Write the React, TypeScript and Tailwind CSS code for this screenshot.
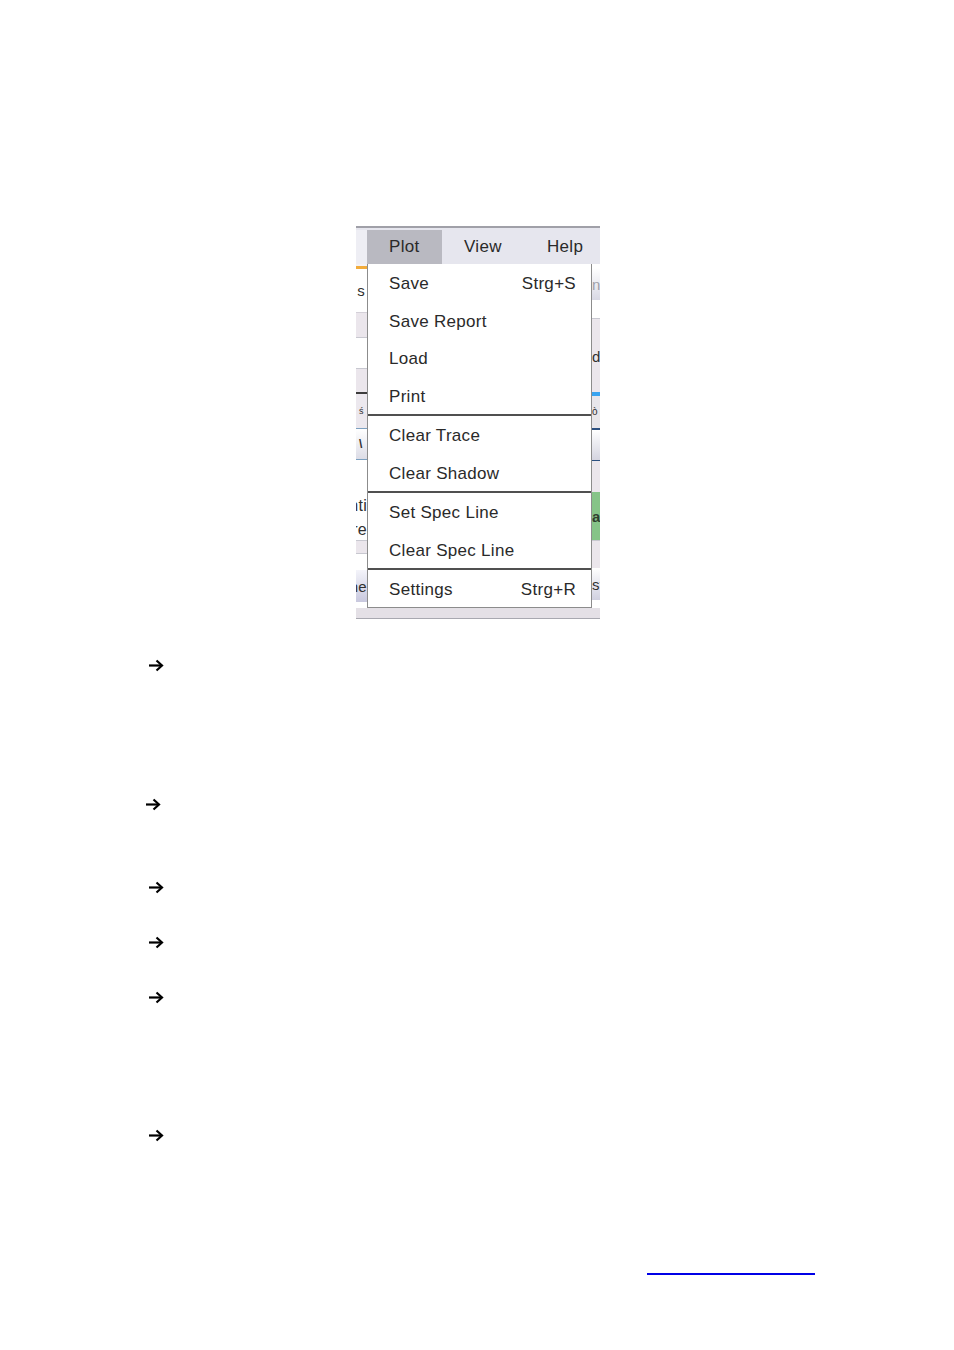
import React from "react";

const menuItems: { label: string; shortcut?: string; sepBefore?: boolean }[] = [
  { label: "Save", shortcut: "Strg+S" },
  { label: "Save Report" },
  { label: "Load" },
  { label: "Print" },
  { label: "Clear Trace", sepBefore: true },
  { label: "Clear Shadow" },
  { label: "Set Spec Line", sepBefore: true },
  { label: "Clear Spec Line" },
  { label: "Settings", shortcut: "Strg+R", sepBefore: true },
];

function Arrow() {
  return (
    <svg width="16" height="13" viewBox="0 0 16 13" className="block">
      <path d="M1 6.5H13" stroke="#000" strokeWidth="2.2" />
      <path d="M8.5 1.5L14 6.5L8.5 11.5" stroke="#000" strokeWidth="2.2" fill="none" />
    </svg>
  );
}

function LeftStrip() {
  return (
    <div className="flex w-[11px] flex-col overflow-hidden text-[15px] leading-none text-[#303030]">
      <div className="h-[2px] bg-[#f4f2f6]" />
      <div className="h-[3px] bg-[#f2ac3c]" />
      <div className="flex h-[43px] items-center justify-end bg-white pr-[2px]">s</div>
      <div className="h-[25px] border-t border-[#d4d0d8] bg-[#ebe6ec]" />
      <div className="h-[31px] border-t border-[#c8c8d0] bg-white" />
      <div className="h-[24px] border-t border-[#c8c8d0] bg-[#ebe6ec]" />
      <div className="h-[2px] bg-[#3c3c3c]" />
      <div className="flex h-[34px] items-center bg-[#ece8ee] pl-[3px] text-[9px]">ś</div>
      <div className="flex h-[32px] items-center border-y border-[#7ca0c0] bg-gradient-to-b from-white to-[#dcdce6] pl-[3px] text-[12px] font-bold">\</div>
      <div className="h-[35px] bg-white" />
      <div className="flex h-[45px] flex-col items-end justify-center bg-white text-[16px] leading-[24px]">
        <span className="whitespace-nowrap">nti</span>
        <span className="whitespace-nowrap">re</span>
      </div>
      <div className="h-[13px] border-t border-[#c8c8d0] bg-[#ebe6ec]" />
      <div className="h-[17px] border-t border-[#c8c8d0] bg-white" />
      <div className="flex h-[32px] items-center justify-end bg-gradient-to-b from-[#f4f4fa] to-[#c8c8de] text-[15px]">
        <span className="whitespace-nowrap">ne</span>
      </div>
      <div className="h-[6px] bg-white" />
    </div>
  );
}

function RightStrip() {
  return (
    <div className="flex w-[8px] flex-col overflow-hidden text-[15px] leading-none text-[#303030]">
      <div className="h-[4px] bg-white" />
      <div className="flex h-[32px] items-center bg-gradient-to-b from-white to-[#d8d8e4] text-[#a0a0a8]">n</div>
      <div className="h-[18px] bg-white" />
      <div className="h-[22px] border-t border-[#c8c8d0] bg-[#ebe6ec]" />
      <div className="flex h-[32px] items-center bg-[#ebe6ec]">dl</div>
      <div className="h-[20px] bg-[#ebe6ec]" />
      <div className="h-[4px] bg-[#38a4f0]" />
      <div className="flex h-[32px] items-center bg-[#e8e6ea] text-[10px]">ò</div>
      <div className="h-[2px] bg-[#2c5080]" />
      <div className="h-[30px] bg-gradient-to-b from-white to-[#d4d4e0]" />
      <div className="h-[32px] border-t border-[#2c5080] bg-[#ebe6ec]" />
      <div className="flex h-[48px] items-center bg-[#86c488] font-bold text-[#304030]">a</div>
      <div className="h-[28px] border-t border-[#c8c8d0] bg-[#ebe6ec]" />
      <div className="flex h-[32px] items-center bg-gradient-to-b from-white to-[#d0d0e0]">st</div>
      <div className="h-[8px] bg-white" />
    </div>
  );
}

function MenuScreenshot() {
  return (
    <div className="ml-[356px] mt-[226px] flex w-[244px] flex-col font-['Liberation_Sans',Arial,sans-serif] text-[17px] tracking-[0.3px] text-[#2a2a2a]">
      <div className="h-[2px] bg-[#a0a0a8]" />
      <div className="flex h-[36px] bg-[#e6e6ee] pt-[2px]">
        <div className="w-[11px] bg-[#eeeef4]" />
        <div className="flex w-[75px] items-center bg-[#b9b9c1] pl-[22px]">Plot</div>
        <div className="flex w-[82px] items-center pl-[22px]">View</div>
        <div className="flex flex-1 items-center pl-[23px]">Help</div>
      </div>
      <div className="flex h-[344px]">
        <LeftStrip />
        <div className="flex w-[225px] flex-col border-x border-b border-[#8c8c8c] bg-white">
          {menuItems.map((item) => (
            <React.Fragment key={item.label}>
              {item.sepBefore && <div className="h-[2px] bg-[#505050]" />}
              <div className="flex h-[37.5px] items-center justify-between pl-[21px] pr-[15px] pt-[3px]">
                <span>{item.label}</span>
                {item.shortcut && <span>{item.shortcut}</span>}
              </div>
            </React.Fragment>
          ))}
        </div>
        <RightStrip />
      </div>
      <div className="h-[10px] bg-[#e4e0e6]" />
      <div className="h-[1px] bg-[#a8a8b0]" />
    </div>
  );
}

export default function App() {
  const arrows = [
    { gap: 40, left: 148 },
    { gap: 127, left: 145 },
    { gap: 71, left: 148 },
    { gap: 43, left: 148 },
    { gap: 43, left: 148 },
    { gap: 126, left: 148 },
  ];

  return (
    <div className="flex h-[1350px] w-[954px] flex-col bg-white">
      <MenuScreenshot />
      {arrows.map((a, i) => (
        <div key={i} style={{ marginTop: a.gap, marginLeft: a.left }} className="h-[12px]">
          <Arrow />
        </div>
      ))}
      <div className="ml-[647px] mt-[132px] h-[2px] w-[168px] bg-[#0000e6]" />
    </div>
  );
}
